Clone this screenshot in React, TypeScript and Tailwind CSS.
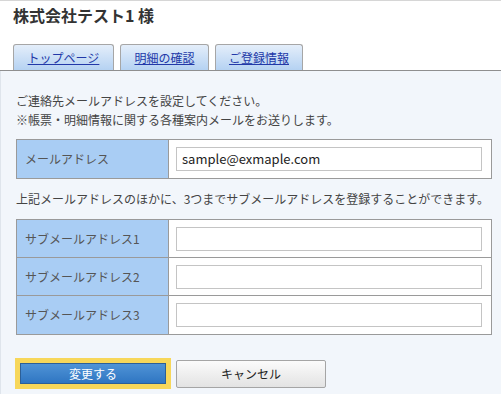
import React from "react";

const tabs = ["トップページ", "明細の確認", "ご登録情報"];
const subRows = ["サブメールアドレス1", "サブメールアドレス2", "サブメールアドレス3"];

const Row: React.FC<{ label: string; value?: string; last?: boolean }> = ({ label, value, last }) => (
  <div className={`flex h-[38px] ${last ? "" : "border-b border-[#9a9a9a]"}`}>
    <div className="w-[152px] shrink-0 bg-[#a9cdf4] border-r border-[#9a9a9a] flex items-center pl-[8px] text-[#555]">
      {label}
    </div>
    <div className="flex-1 bg-white flex items-center pl-[7px] pr-[6px]">
      <div className="w-[306px] h-[24px] border border-[#c4c4c4] bg-white flex items-center px-[5px] text-[13px] text-[#222]">
        {value}
      </div>
    </div>
  </div>
);

export default function App() {
  return (
    <div
      className="w-[501px] h-[394px] bg-white overflow-hidden flex flex-col border-t border-[#d6d6d6] text-[12px] text-[#444]"
      style={{ fontFamily: '"Noto Sans CJK JP", "Noto Sans", sans-serif' }}
    >
      <h1 className="pl-[13px] pt-[3px] h-[43px] text-[16px] font-bold text-[#333] leading-[22px]">
        株式会社テスト1 様
      </h1>

      <div className="flex items-end gap-[6px] pl-[13px] border-b border-[#8f8f8f]">
        {tabs.map((t, i) => (
          <div
            key={t}
            className={`h-[26px] rounded-t-[3px] border border-b-0 border-[#a6a6a6] bg-gradient-to-b from-[#e4eefa] to-[#b5d2f2] flex items-center justify-center ${
              i === 0 ? "w-[101px]" : i === 1 ? "w-[89px]" : "w-[88px]"
            }`}
          >
            <span className="underline text-[#2238a8] text-[12px]">{t}</span>
          </div>
        ))}
      </div>

      <div className="flex-1 bg-[#f2f6fb] border-l border-[#dfe5ec] pl-[15px] pr-[9px]">
        <div className="pt-[20px] leading-[19px]">
          <p>ご連絡先メールアドレスを設定してください。</p>
          <p>※帳票・明細情報に関する各種案内メールをお送りします。</p>
        </div>

        <div className="mt-[10px] border border-[#9a9a9a]">
          <Row label="メールアドレス" value="sample@exmaple.com" last />
        </div>

        <p className="mt-[10px] leading-[19px]">
          上記メールアドレスのほかに、3つまでサブメールアドレスを登録することができます。
        </p>

        <div className="mt-[11px] border border-[#9a9a9a]">
          {subRows.map((r, i) => (
            <Row key={r} label={r} last={i === subRows.length - 1} />
          ))}
        </div>

        <div className="mt-[23px] flex items-center gap-[5px] -ml-[1px]">
          <div className="w-[156px] h-[31px] bg-[#f7d75a] p-[5px]">
            <button className="w-full h-full bg-gradient-to-b from-[#4f93d6] to-[#2f76c2] border border-[#2c5f97] text-white text-[12px]">
              変更する
            </button>
          </div>
          <button className="w-[150px] h-[28px] rounded-[2px] border border-[#a5a5a5] bg-gradient-to-b from-[#fbfbfb] to-[#e3e3e3] text-[#222] text-[12px]">
            キャンセル
          </button>
        </div>
      </div>
    </div>
  );
}
